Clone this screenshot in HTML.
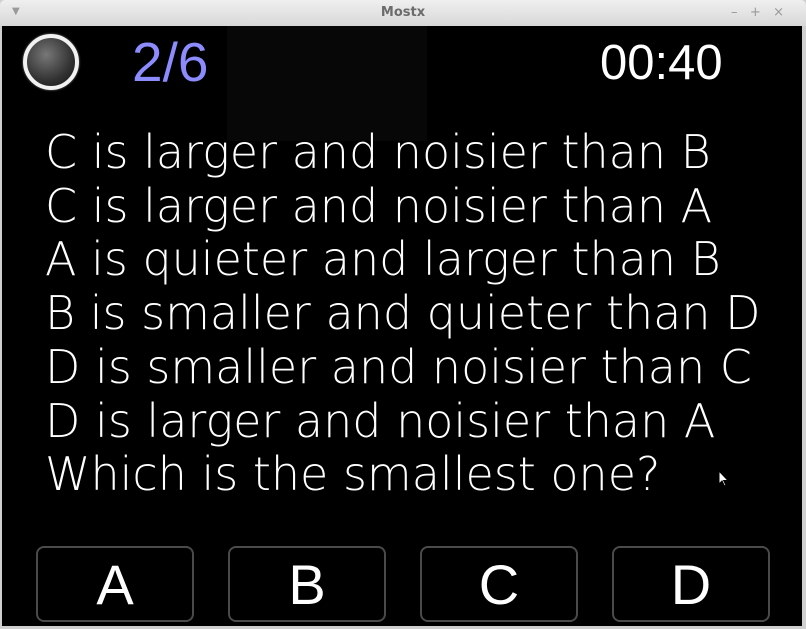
<!DOCTYPE html>
<html><head><style>
body{margin:0;width:806px;height:629px;background:#cfcfcf;position:relative;overflow:hidden;font-family:"DejaVu Sans","Liberation Sans",sans-serif}
.title{position:absolute;left:0;top:0;width:806px;height:26px;background:linear-gradient(#efefef,#d8d8d8);border-radius:5px 5px 0 0}
.title .t{position:absolute;left:0;width:806px;text-align:center;top:5px;font-size:13px;font-weight:bold;color:#6b6b6b}
.content{position:absolute;left:2px;top:26px;width:800px;height:600px;background:#000;overflow:hidden}
.ghost{position:absolute;left:225px;top:0;width:200px;height:115px;background:#070707}
.txt{position:absolute;left:43px;top:100px;color:#fff;font-size:46px;font-weight:200;line-height:53.7px;white-space:nowrap}
.btn{position:absolute;top:520px;width:154px;height:72px;border:2px solid #4a4a4a;border-radius:8px;color:#fff;font-size:56px;text-align:center;line-height:74px;font-family:"Liberation Sans",sans-serif}
</style></head><body>
<div class="title"><span style="position:absolute;left:12px;top:6px;color:#999;font-size:10px">▼</span><div class="t">Mostx</div>
<span style="position:absolute;left:731px;top:5px;color:#999;font-size:13px">–&nbsp;&nbsp;&nbsp;+&nbsp;&nbsp;&nbsp;×</span></div>
<div class="content">
<div class="ghost"></div>
<div style="position:absolute;left:21px;top:8px;width:48px;height:48px;border-radius:50%;border:4px solid #f2f2f2;background:radial-gradient(circle at 40% 35%,#777,#333 60%,#111);box-shadow:0 0 2px #888"></div>
<div style="position:absolute;left:130px;top:4px;color:#8c8cff;font-size:55px;font-family:'Liberation Sans',sans-serif">2/6</div>
<div style="position:absolute;left:598px;top:9px;color:#fff;font-size:49px;font-family:'Liberation Sans',sans-serif">00:40</div>
<div class="txt">C is larger and noisier than B<br>C is larger and noisier than A<br>A is quieter and larger than B<br>B is smaller and quieter than D<br>D is smaller and noisier than C<br>D is larger and noisier than A<br>Which is the smallest one?</div>
<svg style="position:absolute;left:716px;top:444px" width="12" height="18" viewBox="0 0 12 18"><path d="M1 1 L1 14 L4 11 L6.5 16 L8 15.3 L5.6 10.5 L10 10.5 Z" fill="#fff" stroke="#000" stroke-width="1"/></svg>
<div class="btn" style="left:34px">A</div>
<div class="btn" style="left:226px">B</div>
<div class="btn" style="left:418px">C</div>
<div class="btn" style="left:610px">D</div>
</div>
</body></html>
